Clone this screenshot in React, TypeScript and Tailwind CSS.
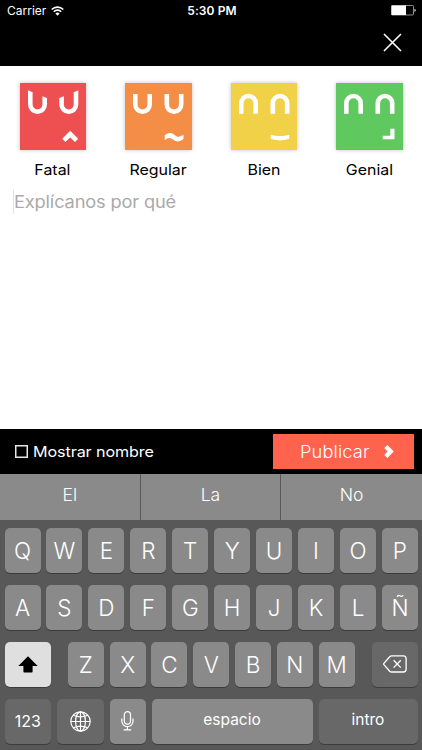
import type { ReactNode } from "react";

const moods = [
  {
    name: "Fatal",
    bg: "bg-[#ee4f50]",
    face: (
      <>
        <path d="M8 7.3L12.6 9.3V21.5a4.9 4.9 0 0 0 9.8 0V13.2L27 15V21.5a9.5 9.5 0 0 1-19 0z" />
        <path d="M58.3 7.3L53.7 9.3V21.5a4.9 4.9 0 0 1-9.8 0V13.2L39.3 15V21.5a9.5 9.5 0 0 0 19 0z" />
        <path d="M50.2 47.7L58.2 55.7L55 59L50.2 54.4L45.4 59L42.2 55.7z" />
      </>
    ),
  },
  {
    name: "Regular",
    bg: "bg-[#f48d45]",
    face: (
      <>
        <path d="M8 11h4.6v10.5a4.9 4.9 0 0 0 9.8 0V11H27v10.5a9.5 9.5 0 0 1-19 0z" />
        <path d="M39.5 11h4.6v10.5a4.9 4.9 0 0 0 9.8 0V11h4.6v10.5a9.5 9.5 0 0 1-19 0z" />
        <path d="M39.7 52.2C44 49 46.5 49.4 50 52.2C53 54.4 55 54.2 58.5 51.6V56C54 59.3 51.5 59.2 48 56.6C45 54.3 43.5 54.4 39.7 57z" />
      </>
    ),
  },
  {
    name: "Bien",
    bg: "bg-[#f1d148]",
    face: (
      <>
        <path d="M8 30.7h4.6V20.2a4.9 4.9 0 0 1 9.8 0v10.5H27V20.2a9.5 9.5 0 0 0-19 0z" />
        <path d="M39.5 30.7h4.6V20.2a4.9 4.9 0 0 1 9.8 0v10.5h4.6V20.2a9.5 9.5 0 0 0-19 0z" />
        <path d="M39.7 51.8Q49 54.4 58.3 51.8V55.8Q49 59 39.7 55.8z" />
      </>
    ),
  },
  {
    name: "Genial",
    bg: "bg-[#5fc85f]",
    face: (
      <>
        <path d="M8 30.7h4.6V20.2a4.9 4.9 0 0 1 9.8 0v10.5H27V20.2a9.5 9.5 0 0 0-19 0z" />
        <path d="M39.5 30.7h4.6V20.2a4.9 4.9 0 0 1 9.8 0v10.5h4.6V20.2a9.5 9.5 0 0 0-19 0z" />
        <path d="M54.3 45.7h4.2V56.2H46.7V52.7h7.6z" />
      </>
    ),
  },
];

const suggestions = ["El", "La", "No"];
const firstRow = ["Q", "W", "E", "R", "T", "Y", "U", "I", "O", "P"];
const secondRow = ["A", "S", "D", "F", "G", "H", "J", "K", "L", "Ñ"];
const thirdRow = ["Z", "X", "C", "V", "B", "N", "M"];

const Key = ({
  children,
  className = "bg-[#8a8a8a]",
}: {
  children: ReactNode;
  className?: string;
}) => (
  <button
    className={`flex h-[45.5px] items-center justify-center rounded-[5px] shadow-[0_1px_0.5px_#3c3c3c] ${className}`}
  >
    {children}
  </button>
);

const Letter = ({ value }: { value: string }) => (
  <Key className="w-[36px] shrink-0 bg-[#8a8a8a] pt-px text-[22.5px] leading-none font-[350]">
    {value}
  </Key>
);

const StatusBar = () => (
  <div className="grid h-[21px] grid-cols-3 items-center pr-[5px] pl-[7px] text-[12px] leading-none">
    <div className="flex items-center gap-[5px] pt-px">
      <span>Carrier</span>
      <svg width="13" height="10" viewBox="0 0 13 10" fill="none" stroke="white" strokeWidth="1.6">
        <path d="M0.7 3.5a8.2 8.2 0 0 1 11.6 0" />
        <path d="M2.8 5.7a5.2 5.2 0 0 1 7.4 0" />
        <path d="M4.4 7.6a3 3 0 0 1 4.2 0L6.5 9.8z" fill="white" stroke="none" />
      </svg>
    </div>
    <span className="pt-px text-center font-semibold tracking-[0.1px] whitespace-nowrap">
      5:30 PM
    </span>
    <svg className="justify-self-end" width="26" height="11" viewBox="0 0 26 11">
      <rect x="0.5" y="0.5" width="22" height="9.5" rx="0.7" fill="none" stroke="#8d8d8d" />
      <rect x="0.5" y="0.5" width="14.5" height="9.5" fill="white" />
      <path d="M23.4 3.7q1.5 0.3 1.5 1.6t-1.5 1.6z" fill="#b5b5b5" />
    </svg>
  </div>
);

const Keyboard = () => (
  <div className="h-[276.5px] bg-[#585858]">
    <div className="grid h-[46px] grid-cols-3 divide-x divide-[#595959] bg-[#8a8a8a] text-[17.5px] font-[350]">
      {suggestions.map((word) => (
        <div key={word} className="flex items-center justify-center pb-[3px]">
          {word}
        </div>
      ))}
    </div>
    <div className="flex flex-col gap-[11.5px] pt-[8px] pr-[4px] pl-[4.5px]">
      <div className="flex justify-between">
        {firstRow.map((value) => (
          <Letter key={value} value={value} />
        ))}
      </div>
      <div className="flex justify-between">
        {secondRow.map((value) => (
          <Letter key={value} value={value} />
        ))}
      </div>
      <div className="flex justify-between">
        <Key className="w-[46px] bg-[#dfdfdf]">
          <svg width="20" height="17" viewBox="0 0 20 17" fill="black">
            <path d="M10 0.3L19.7 10H14.6V15.6q0 0.9-0.9 0.9H6.3q-0.9 0-0.9-0.9V10H0.3z" />
          </svg>
        </Key>
        <div className="flex gap-[5.8px]">
          {thirdRow.map((value) => (
            <Letter key={value} value={value} />
          ))}
        </div>
        <Key className="w-[46px] bg-[#686868]">
          <svg width="24" height="18" viewBox="0 0 24 18" fill="none" stroke="white" strokeWidth="1.3">
            <path d="M8.6 0.9H20.3Q23.1 0.9 23.1 3.7V14.2Q23.1 17 20.3 17H8.6Q7.5 17 6.7 16.2L0.9 9.6Q0.4 9 0.9 8.3L6.7 1.7Q7.5 0.9 8.6 0.9z" />
            <path d="M10.6 5.3L17.8 12.6M17.8 5.3L10.6 12.6" />
          </svg>
        </Key>
      </div>
      <div className="flex gap-[6px]">
        <Key className="w-[46.5px] bg-[#686868] text-[16px]">123</Key>
        <Key className="w-[46.5px] bg-[#686868]">
          <svg width="21" height="21" viewBox="0 0 21 21" fill="none" stroke="white" strokeWidth="1.2">
            <circle cx="10.5" cy="10.5" r="9.7" />
            <ellipse cx="10.5" cy="10.5" rx="4.9" ry="9.7" />
            <path d="M10.5 0.8V20.2M0.8 10.5H20.2M3.3 4.2Q10.5 7.7 17.7 4.2M3.3 16.8Q10.5 13.3 17.7 16.8" />
          </svg>
        </Key>
        <Key className="w-[36px] bg-[#8a8a8a]">
          <svg width="13" height="20" viewBox="0 0 13 20" fill="none" stroke="white" strokeWidth="1.2">
            <rect x="3.3" y="0.7" width="6.2" height="12.4" rx="3.1" />
            <path d="M0.8 7.4V10.1a5.6 5.6 0 0 0 11.2 0V7.4M6.4 15.7V18.7M2.6 18.9H10.2" />
          </svg>
        </Key>
        <Key className="w-[161px] bg-[#8a8a8a] pb-[3px] text-[15.5px]">espacio</Key>
        <Key className="w-[99px] bg-[#686868] pb-[3px] text-[15.5px]">intro</Key>
      </div>
    </div>
  </div>
);

const App = () => {
  return (
    <div className="flex h-[750px] w-[422px] flex-col overflow-hidden bg-white font-['Inter',sans-serif] text-white">
      <header className="h-[65.5px] bg-black">
        <StatusBar />
        <div className="flex justify-end pt-[12px] pr-[20px]">
          <svg width="19" height="19" viewBox="0 0 19 19" stroke="white" strokeWidth="1.6">
            <path d="M1 1L18 18M18 1L1 18" />
          </svg>
        </div>
      </header>

      <main className="flex-1 text-black">
        <div className="grid grid-cols-4 pt-[17.8px]">
          {moods.map((mood) => (
            <div key={mood.name} className="flex flex-col items-center">
              <div className={`size-[66.5px] shadow-[0_0_4px_rgba(0,0,0,0.25)] ${mood.bg}`}>
                <svg width="66.5" height="66.5" viewBox="0 0 66.5 66.5" fill="white">
                  {mood.face}
                </svg>
              </div>
              <span className="mt-[10px] scale-x-110 text-[14.5px] leading-[20px]">
                {mood.name}
              </span>
            </div>
          ))}
        </div>
        <div className="mt-[10px] ml-[13px] flex h-[24px] items-center border-l border-[#dcdff8]">
          <span className="origin-left scale-x-110 pt-[2px] text-[16.6px] tracking-[-0.15px] text-[#aaaaaa]">
            Explícanos por qué
          </span>
        </div>
      </main>

      <div className="flex h-[44.5px] items-center justify-between bg-black pr-[8px] pl-[15px]">
        <label className="flex items-center gap-[5px] pt-px text-[14.7px]">
          <span className="size-[13px] shadow-[inset_0_0_0_1.5px_#e6e6e6]" />
          <span className="origin-left scale-x-110 tracking-[-0.1px]">Mostrar nombre</span>
        </label>
        <button className="flex h-[35px] w-[141px] items-center bg-[#ff624d] pl-[27px] text-[16.6px]">
          <span className="w-[84px] origin-left scale-x-110 pt-[2px] text-left font-[350] tracking-[0.1px]">
            Publicar
          </span>
          <svg width="10" height="13" viewBox="0 0 10 13" fill="white">
            <path d="M3.4 0L9.8 6.5L3.4 13L0.2 9.9L3.5 6.5L0.2 3.1z" />
          </svg>
        </button>
      </div>

      <Keyboard />
    </div>
  );
};

export default App;
